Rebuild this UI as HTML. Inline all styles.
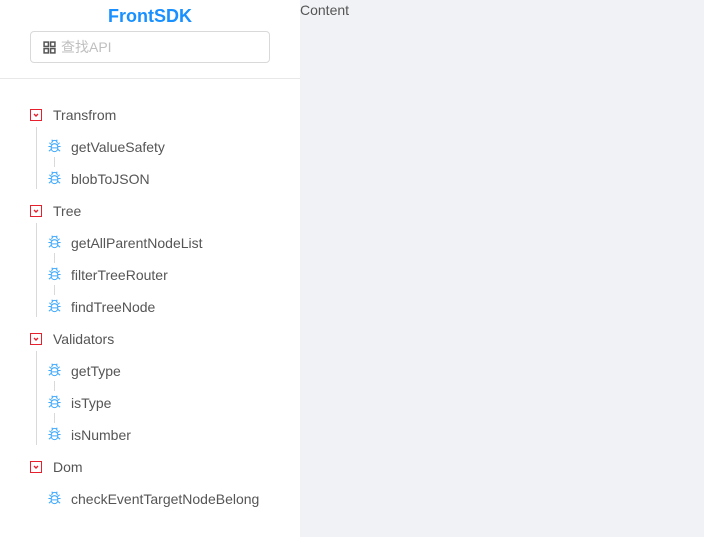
<!DOCTYPE html>
<html><head><meta charset="utf-8"><style>
*{margin:0;padding:0;box-sizing:border-box}
body{width:704px;height:537px;overflow:hidden;background:#f0f2f5;font-family:"Liberation Sans","Noto Sans CJK SC",sans-serif;position:relative}
#side{position:absolute;left:0;top:0;width:300px;height:537px;background:#fff}
.title{position:absolute;left:0;width:300px;top:5px;text-align:center;color:#1890ff;font-weight:bold;font-size:18px;line-height:22px}
.search{position:absolute;left:30px;top:31px;width:240px;height:32px;border:1px solid #d9d9d9;border-radius:4px;color:#bfbfbf;font-size:14px;line-height:30px;padding-left:30px}
.search svg{position:absolute;left:12px;top:9px}
.hr{position:absolute;left:0;top:78px;width:300px;height:1px;background:#e8e8e8}
.content{position:absolute;left:300px;top:2px;font-size:14px;color:#555;line-height:16px}
.row{position:absolute;font-size:14px;color:#555;line-height:20px}
.box{position:absolute;width:12px;height:12px;border:1px solid #e8202e}
.box svg{position:absolute;left:2px;top:2px}
.vl{position:absolute;width:1px;background:#d9d9d9}
.bug{position:absolute}
</style></head><body>
<div id="side">
<div class="title">FrontSDK</div>
<div class="search"><svg width="13" height="13" viewBox="0 0 12 12" fill="none" stroke="#555" stroke-width="1.4"><rect x="1" y="1" width="4" height="4"/><rect x="7" y="1" width="4" height="4"/><rect x="1" y="7" width="4" height="4"/><rect x="7" y="7" width="4" height="4"/></svg>查找API</div>
<div class="hr"></div>
<div id="tree"></div>
</div>
<div class="content">Content</div>
<script>
var t=document.getElementById('tree');
var groups=[["Transfrom",115,["getValueSafety","blobToJSON"]],["Tree",211,["getAllParentNodeList","filterTreeRouter","findTreeNode"]],["Validators",339,["getType","isType","isNumber"]],["Dom",467,["checkEventTargetNodeBelong"]]];
var bug='<svg width="15" height="15" viewBox="0 0 16 16" fill="none" stroke="#40a9ff" stroke-width="1.1"><path d="M5 4.5a3 3 0 0 1 6 0"/><rect x="4.5" y="5" width="7" height="8.5" rx="3.5"/><path d="M4.5 8H1.5M11.5 8h3M4.5 11l-2.5 2M11.5 11l2.5 2M4.8 6L2.5 4M11.2 6l2.3-2M4.5 9.5h7M6 2L5 0.8M10 2l1-1.2"/></svg>';
var h='';
groups.forEach(function(g,gi){
var y=g[1];
h+='<div class="box" style="left:30px;top:'+(y-6)+'px"><svg width="6" height="6" viewBox="0 0 6 6"><path d="M1 2l2 2 2-2" stroke="#e8202e" stroke-width="1.4" fill="none"/></svg></div>';
h+='<div class="row" style="left:53px;top:'+(y-10)+'px">'+g[0]+'</div>';
var n=g[2].length;
if(gi<3)h+='<div class="vl" style="left:36px;top:'+(y+12)+'px;height:'+(n*32-2)+'px"></div>';
g[2].forEach(function(c,i){
var cy=y+32*(i+1);
h+='<div class="bug" style="left:47px;top:'+(cy-8)+'px">'+bug+'</div>';
h+='<div class="row" style="left:71px;top:'+(cy-10)+'px">'+c+'</div>';
if(i<n-1)h+='<div class="vl" style="left:54px;top:'+(cy+10)+'px;height:10px"></div>';
});
});
t.innerHTML=h;
</script>
</body></html>
